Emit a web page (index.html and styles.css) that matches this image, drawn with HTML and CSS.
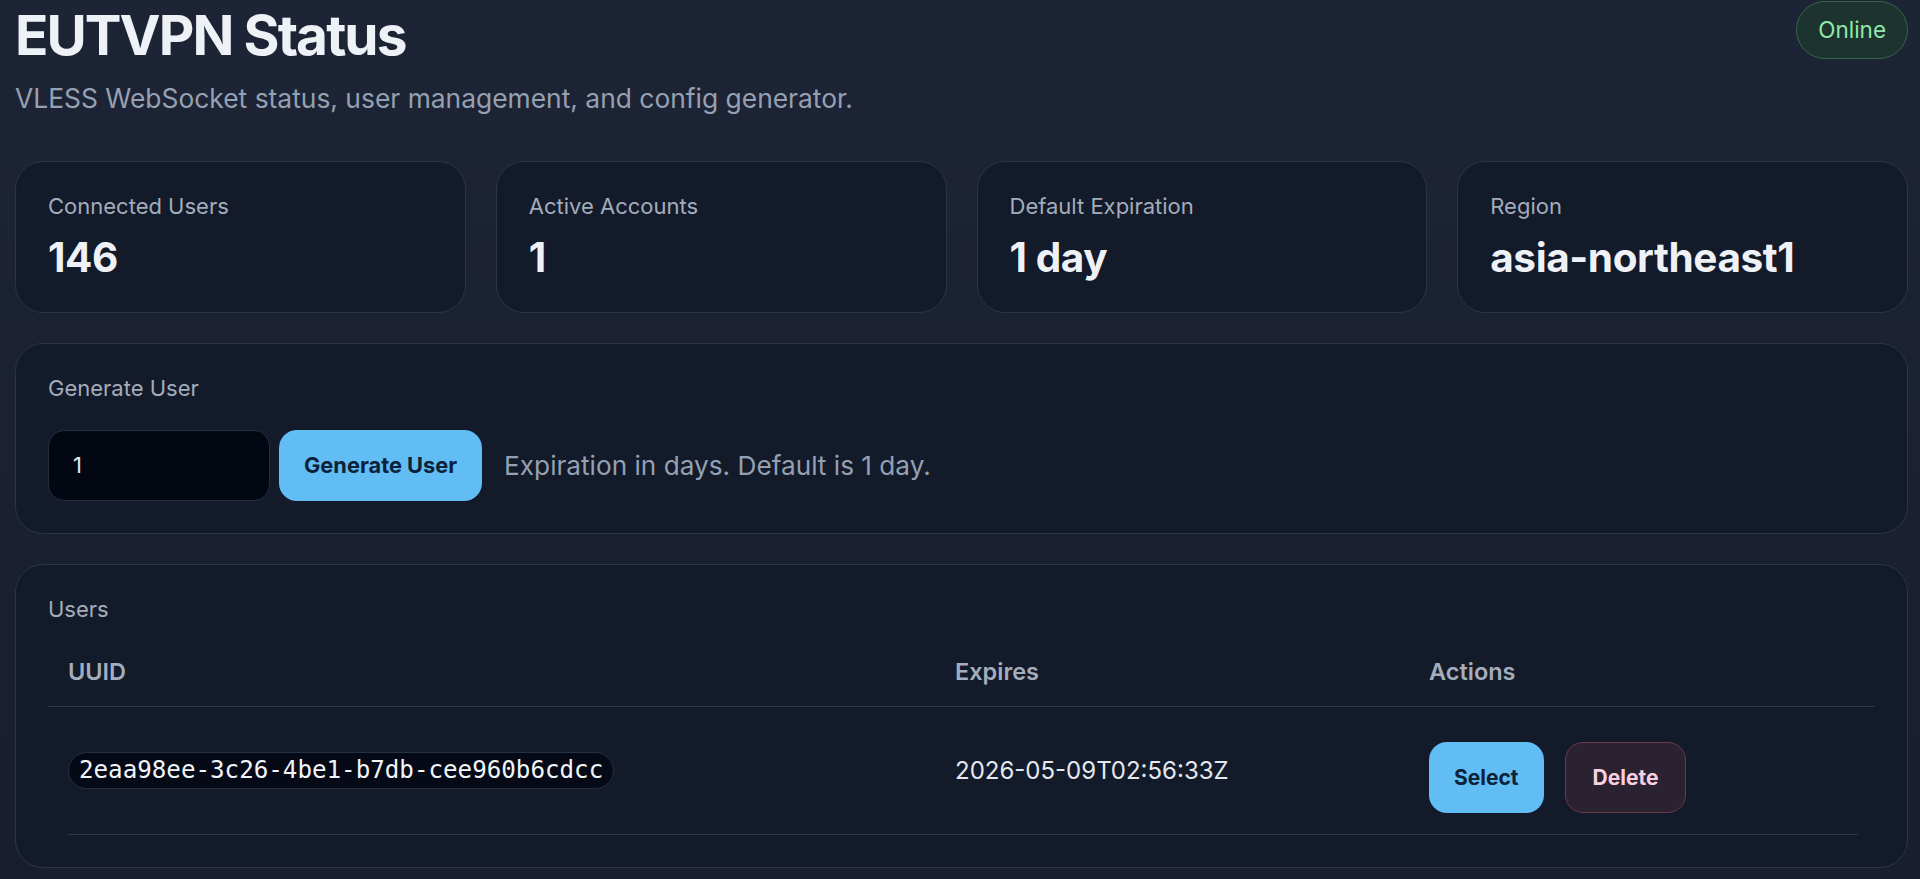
FILE: index.html
```html
<!DOCTYPE html>
<html lang="en">
<head>
    <meta charset="UTF-8">
    <meta name="viewport" content="width=device-width, initial-scale=1.0">
    <title>EUTVPN Status</title>
    <link rel="stylesheet" href="styles.css">
</head>
<body>
    <header class="top">
        <div>
            <h1 class="title">EUTVPN Status</h1>
            <p class="subtitle">VLESS WebSocket status, user management, and config generator.</p>
        </div>
        <span class="badge">Online</span>
    </header>

    <section class="stats">
        <div class="card stat">
            <div class="label">Connected Users</div>
            <div class="value">146</div>
        </div>
        <div class="card stat">
            <div class="label">Active Accounts</div>
            <div class="value">1</div>
        </div>
        <div class="card stat">
            <div class="label">Default Expiration</div>
            <div class="value">1 day</div>
        </div>
        <div class="card stat">
            <div class="label">Region</div>
            <div class="value">asia-northeast1</div>
        </div>
    </section>

    <section class="card panel">
        <div class="label">Generate User</div>
        <form class="gen-row" id="generateForm">
            <input class="input" type="number" id="days" value="1" min="1">
            <button type="submit" class="btn btn-primary btn-gen">Generate User</button>
            <span class="hint">Expiration in days. Default is 1 day.</span>
        </form>
    </section>

    <section class="card panel">
        <div class="label">Users</div>
        <div class="users">
            <div class="users-head">
                <div>UUID</div>
                <div>Expires</div>
                <div>Actions</div>
            </div>
            <div class="users-row">
                <div class="cell"><code class="uuid">2eaa98ee-3c26-4be1-b7db-cee960b6cdcc</code></div>
                <div class="cell date">2026-05-09T02:56:33Z</div>
                <div class="actions">
                    <button class="btn btn-primary">Select</button>
                    <button class="btn btn-danger">Delete</button>
                </div>
            </div>
        </div>
    </section>
</body>
</html>
```

FILE: styles.css
```css
body {
    margin: 0;
    padding: 0 12px 16px 15px;
    font-family: Inter, "Noto Sans", sans-serif;
    color: #e5e7eb;
    background: linear-gradient(180deg, #1d2435 0%, #181e2d 100%);
    min-height: 100vh;
    box-sizing: border-box;
}
.top {
    display: flex;
    justify-content: space-between;
    align-items: flex-start;
}
.title {
    margin: 5px 0 0;
    font-size: 55px;
    line-height: 1.1;
    font-weight: 700;
    letter-spacing: -0.035em;
    color: #eef1f5;
}
.subtitle {
    margin: 15px 0 0;
    font-size: 26.4px;
    line-height: 1.35;
    color: #95a0b3;
}
.badge {
    margin-top: 1px;
    height: 56px;
    line-height: 56px;
    padding: 0 21px;
    border-radius: 999px;
    border: 1px solid #35644b;
    background: #1c332f;
    color: #8fe7a8;
    font-size: 22.5px;
}
.stats {
    display: grid;
    grid-template-columns: repeat(4, 1fr);
    gap: 30px;
    margin-top: 45px;
}
.card {
    background: #131a2a;
    border: 1px solid #2c3546;
    border-radius: 28px;
    padding: 30px 32px;
}
.stat {
    display: flex;
    flex-direction: column;
    gap: 13px;
}
.label {
    font-size: 22px;
    line-height: 1.3;
    color: #a3acba;
}
.value {
    font-size: 40.5px;
    line-height: 1.2;
    font-weight: 700;
    letter-spacing: -0.01em;
    color: #eef1f5;
}
.panel {
    margin-top: 30px;
    padding-bottom: 32px;
}
.gen-row {
    display: flex;
    align-items: center;
    gap: 9px;
    margin: 27px 0 0;
}
.input {
    width: 222px;
    height: 71px;
    box-sizing: border-box;
    padding: 0 24px;
    background: #030712;
    border: 1px solid #252e3f;
    border-radius: 16px;
    color: #e5e7eb;
    font-family: Inter, sans-serif;
    font-size: 22px;
    -moz-appearance: textfield;
}
.input::-webkit-inner-spin-button,
.input::-webkit-outer-spin-button {
    -webkit-appearance: none;
    margin: 0;
}
.btn {
    height: 71px;
    padding: 0 24px;
    border-radius: 18px;
    border: 1px solid transparent;
    font-family: Inter, sans-serif;
    font-size: 21px;
    font-weight: 700;
    cursor: pointer;
}
.btn-primary {
    background: #62bdf5;
    color: #0c2239;
}
.btn-primary:hover {
    background: #7cc8f7;
}
.btn-gen {
    padding: 0 24px;
    font-size: 21.8px;
}
.btn-danger {
    padding: 0 27px;
    background: #2a2131;
    border-color: #6c3a4d;
    color: #fbcfe0;
}
.hint {
    margin-left: 13px;
    font-size: 26.2px;
    color: #95a0b3;
}
.users {
    margin-top: 16px;
}
.users-head,
.users-row {
    display: grid;
    grid-template-columns: 887px 474px 1fr;
}
.users-head {
    padding: 18px 20px 21px;
    border-bottom: 1px solid #2e3748;
    font-size: 23.5px;
    line-height: 27px;
    font-weight: 600;
    color: #a4adbb;
}
.users-row {
    margin: 0 17px 0 20px;
    padding: 21px 0;
    border-bottom: 1px solid #2e3748;
    align-items: center;
}
.uuid {
    display: inline-block;
    padding: 3px 10px;
    border-radius: 999px;
    border: 1px solid #263043;
    background: #050a16;
    color: #f1f5f9;
    font-family: "DejaVu Sans Mono", monospace;
    font-size: 24.2px;
    line-height: 29px;
}
.date {
    font-size: 24px;
    color: #e4e8ef;
}
.actions {
    display: flex;
    gap: 21px;
    padding-top: 14px;
}
```
